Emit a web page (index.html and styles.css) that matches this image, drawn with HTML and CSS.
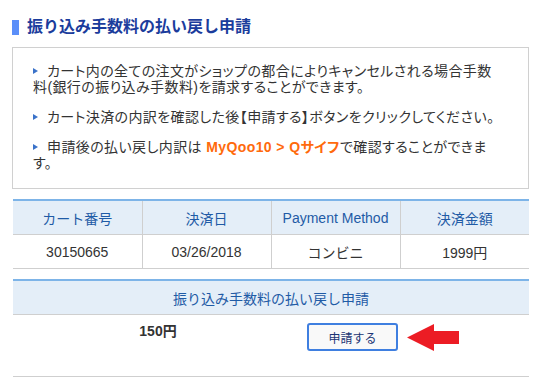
FILE: index.html
```html
<!DOCTYPE html>
<html lang="ja">
<head>
    <meta charset="UTF-8">
    <meta name="viewport" content="width=device-width, initial-scale=1.0">
    <title>振り込み手数料の払い戻し申請</title>
    <link rel="stylesheet" href="styles.css">
</head>
<body>
    <div class="page">
        <h2 class="title">振り込み手数料の払い戻し申請</h2>

        <div class="notice">
            <ul>
                <li><span class="arrow"></span>カート内の全ての注文がショップの都合によりキャンセルされる場合手数<br>料(銀行の振り込み手数料)を請求することができます。</li>
                <li><span class="arrow"></span>カート決済の内訳を確認した後【申請する】ボタンをクリックしてください。</li>
                <li><span class="arrow"></span>申請後の払い戻し内訳は <strong class="link">MyQoo10 &gt; Qサイフ</strong>で確認することができま<br>す。</li>
            </ul>
        </div>

        <table class="grid">
            <tr>
                <th>カート番号</th>
                <th>決済日</th>
                <th>Payment Method</th>
                <th>決済金額</th>
            </tr>
            <tr>
                <td>30150665</td>
                <td>03/26/2018</td>
                <td>コンビニ</td>
                <td>1999円</td>
            </tr>
        </table>

        <table class="grid refund">
            <colgroup>
                <col class="col-amount">
                <col class="col-action">
                <col>
            </colgroup>
            <tr>
                <th colspan="3">振り込み手数料の払い戻し申請</th>
            </tr>
            <tr>
                <td class="amount"><strong>150円</strong></td>
                <td class="action"><button type="button">申請する</button></td>
                <td class="pointer">
                    <svg width="52" height="27" viewBox="0 0 52 27">
                        <polygon points="0,13.5 27,0 27,7 52,7 52,20 27,20 27,27" fill="#ec1c24"/>
                    </svg>
                </td>
            </tr>
        </table>
    </div>
</body>
</html>
```

FILE: styles.css
```css
body {
    margin: 0;
    background: #fff;
    font-family: "Liberation Sans", "Noto Sans CJK JP", sans-serif;
    color: #333;
}
.page {
    width: 517px;
    padding: 0 13px 0 12px;
}
.title {
    margin: 17px 0 0 0;
    font-size: 16px;
    line-height: 20px;
    color: #1b3c9c;
    display: flex;
    align-items: center;
}
.title::before {
    content: "";
    width: 7px;
    height: 15px;
    background: #5b8ff9;
    margin-right: 8px;
}
.notice {
    margin-top: 10px;
    border: 1px solid #d0d0d0;
    padding: 15px 10px 17px 20px;
}
.notice ul {
    list-style: none;
    margin: 0;
    padding: 0;
    font-size: 14px;
    line-height: 16px;
    letter-spacing: 0.4px;
    font-feature-settings: "palt";
    white-space: nowrap;
}
.notice li {
    margin-bottom: 14px;
}
.notice li:last-child {
    margin-bottom: 0;
}
.arrow {
    display: inline-block;
    width: 0;
    height: 0;
    border-left: 5px solid #3a72c9;
    border-top: 3.5px solid transparent;
    border-bottom: 3.5px solid transparent;
    margin-right: 9px;
    vertical-align: 2px;
}
.link {
    color: #ff6a0c;
}
.grid {
    width: 516px;
    margin-left: 1px;
    border-collapse: collapse;
    table-layout: fixed;
    font-size: 14px;
    margin-top: 10px;
    border-top: 2px solid #7db4e8;
}
.grid th {
    background: #e4eef8;
    color: #1f5ba6;
    font-weight: normal;
    height: 33px;
    padding: 0;
    border-bottom: 1px solid #cfcfcf;
    border-left: 1px solid #cfcfcf;
}
.grid td {
    height: 33px;
    padding: 0;
    text-align: center;
    border-bottom: 1px solid #cfcfcf;
    border-left: 1px solid #cfcfcf;
}
.grid th:first-child,
.grid td:first-child {
    border-left: none;
}
.col-amount {
    width: 290px;
}
.col-action {
    width: 98px;
}
.refund td {
    border-left: none;
    height: 53px;
    padding-top: 8px;
    vertical-align: top;
}
.refund .amount {
    line-height: 16px;
}
.refund .action {
    text-align: left;
}
.refund .pointer {
    text-align: left;
    padding-left: 6px;
    padding-top: 9px;
    height: 52px;
}
.refund button {
    width: 91px;
    height: 28px;
    margin-left: 4px;
    background: #f9f9f9;
    border: 2px solid #3f7fe0;
    border-radius: 3px;
    color: #1b3574;
    font-family: "Liberation Sans", "Noto Sans CJK JP", sans-serif;
    font-size: 12px;
    cursor: pointer;
}
```
